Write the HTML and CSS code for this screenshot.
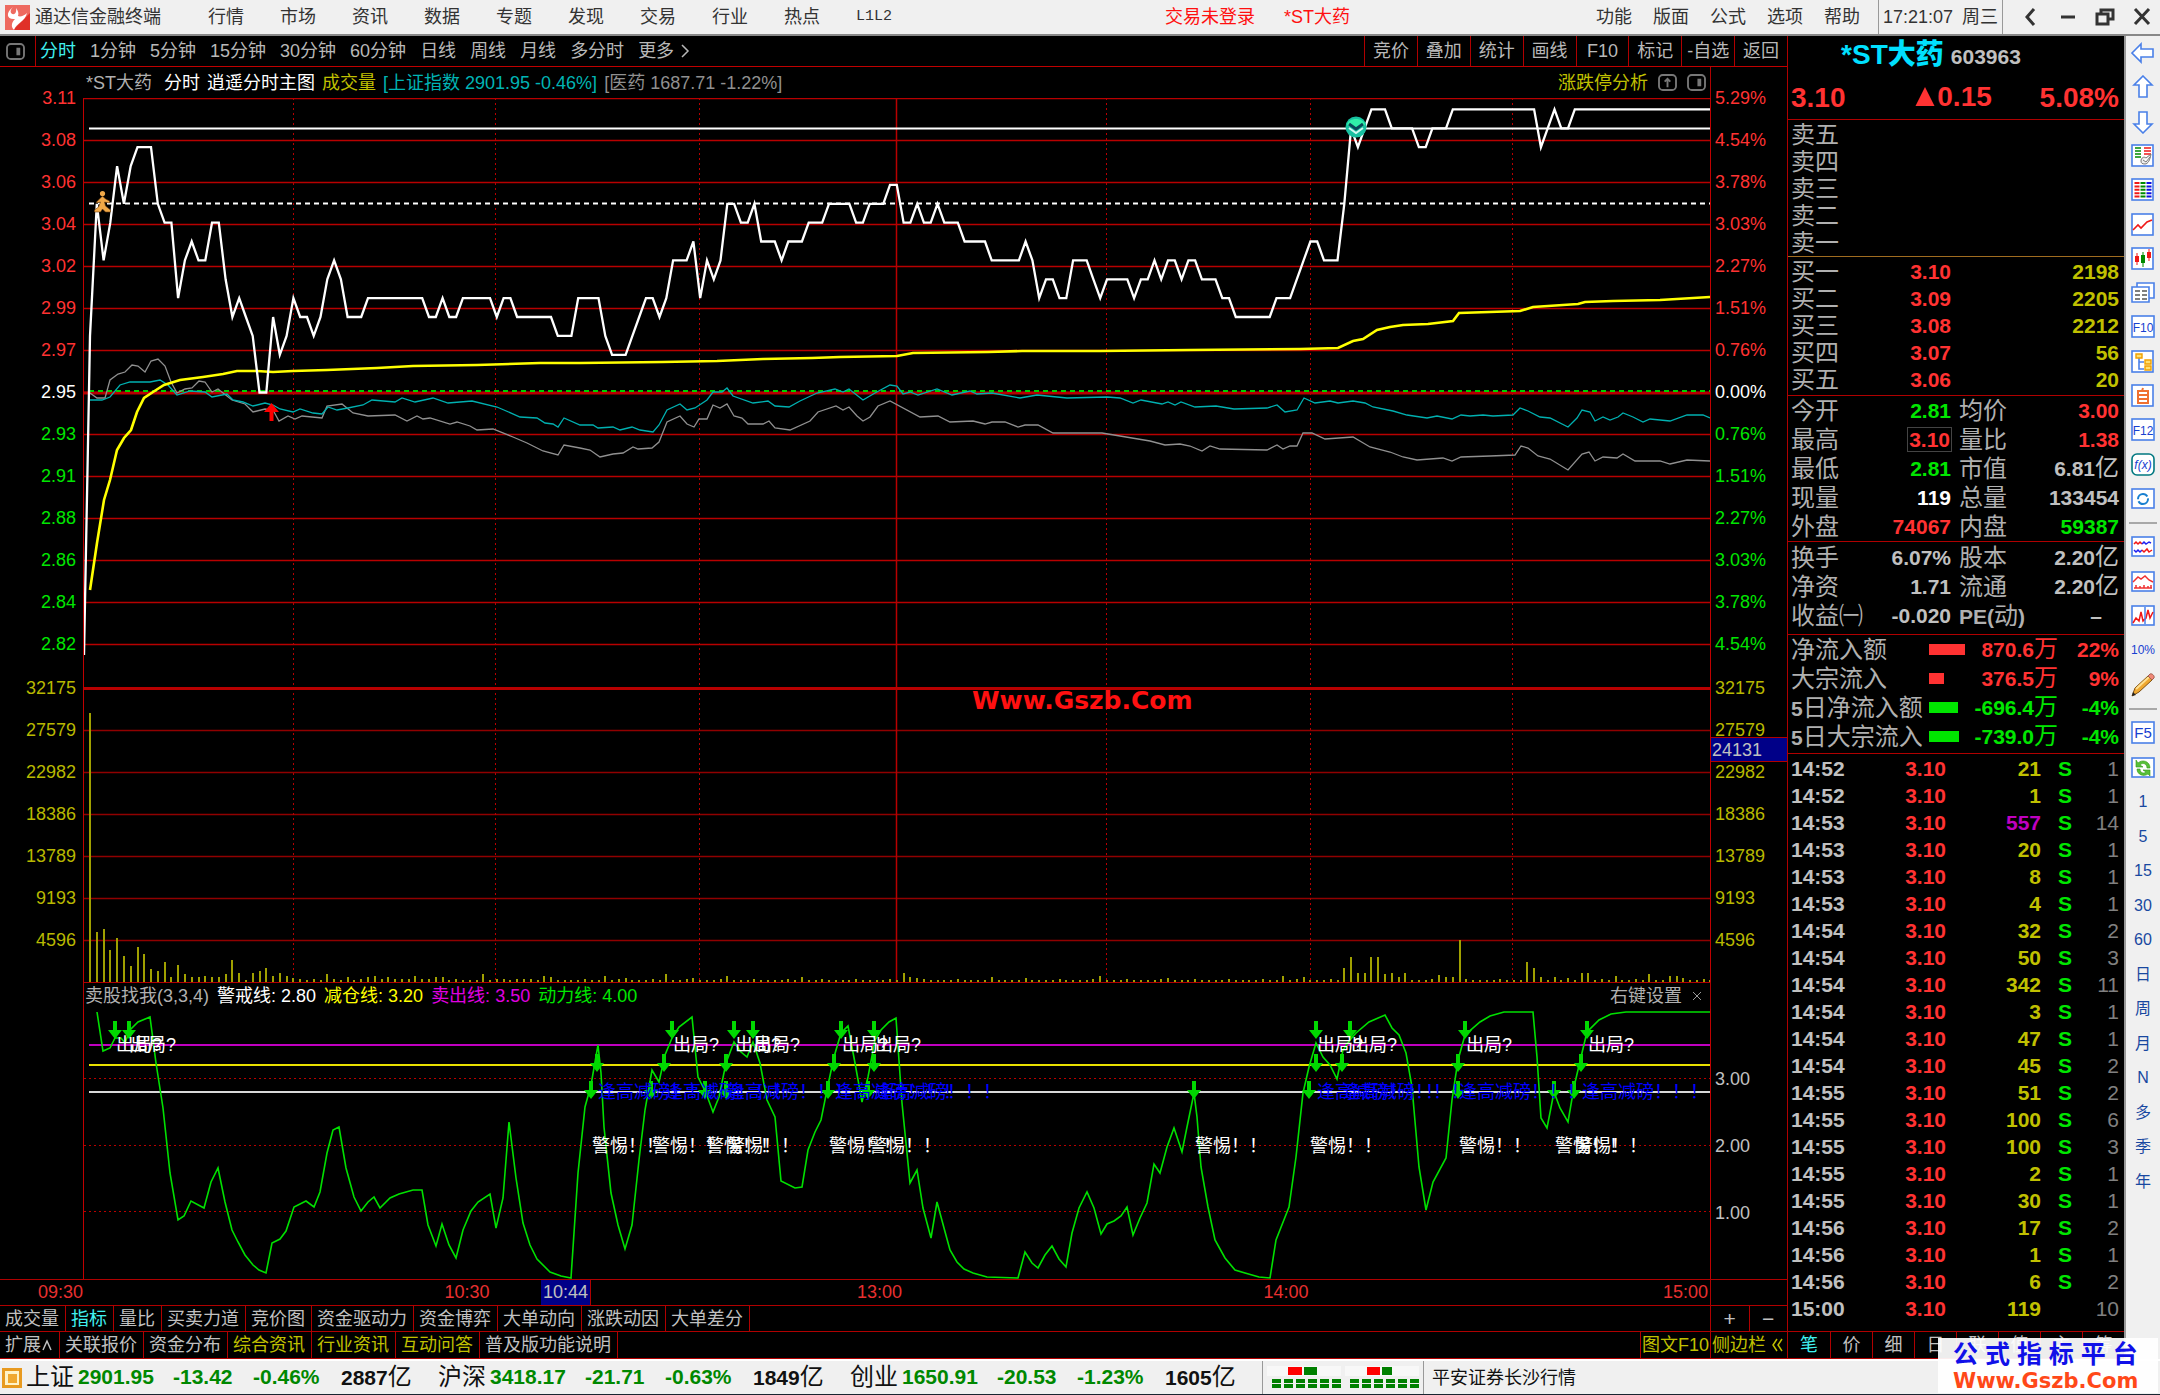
FILE: index.html
```html
<!DOCTYPE html>
<html lang="zh-CN">
<head>
    <meta charset="UTF-8">
    <meta name="viewport" content="width=device-width, initial-scale=1.0">
    <title>通达信金融终端</title>
    <link rel="stylesheet" href="styles.css">
</head>
<body>
    <header class="titlebar">
        <svg class="logo" viewBox="0 0 25 25"><rect width="25" height="25" fill="#e03028"/><path d="M0 0h25v8L8 25H0z" fill="#ee6a60"/><path d="M8 2C0 8 2 15 10 14 6 18 6 22 9 25c2-7 11-8 13-17-3 3-7 4-9 3 1-3 0-5-2-8 1 5-2 8-5 5-1-2 0-4 2-6z" fill="#fff"/></svg>
        <span class="app-name">通达信金融终端</span>
        <nav class="main-menu">
            <button>行情</button><button>市场</button><button>资讯</button><button>数据</button><button>专题</button><button>发现</button><button>交易</button><button>行业</button><button>热点</button><button class="mono">L1L2</button>
        </nav>
        <div class="login-state"><span>交易未登录</span><span>*ST大药</span></div>
        <nav class="sub-menu">
            <button>功能</button><button>版面</button><button>公式</button><button>选项</button><button>帮助</button>
        </nav>
        <div class="clock"><span>17:21:07</span><span>周三</span></div>
        <div class="window-buttons">
            <button aria-label="后退"><svg viewBox="0 0 20 20"><path d="M13 2 6 10l7 8"/></svg></button>
            <button aria-label="最小化"><svg viewBox="0 0 20 20"><path d="M3 10h14"/></svg></button>
            <button aria-label="还原"><svg viewBox="0 0 20 20"><path d="M2 7h11v10H2zM6 7V3h12v9h-5"/></svg></button>
            <button aria-label="关闭"><svg viewBox="0 0 20 20"><path d="m3 2 14 15M17 2 3 17"/></svg></button>
        </div>
    </header>

    <main class="workspace">
        <section class="chart-area">
            <div class="toolbar">
                <button class="panel-toggle" aria-label="侧栏"><svg viewBox="0 0 20 18"><rect x="1" y="1" width="18" height="16" rx="4"/><path d="M13 5v8" stroke-width="4"/></svg></button>
                <nav class="periods">
                    <button class="active">分时</button><button>1分钟</button><button>5分钟</button><button>15分钟</button><button>30分钟</button><button>60分钟</button><button>日线</button><button>周线</button><button>月线</button><button>多分时</button><button>更多<svg viewBox="0 0 10 16"><path d="m2 2 6 6-6 6"/></svg></button>
                </nav>
                <nav class="tools">
                    <button>竞价</button><button>叠加</button><button>统计</button><button>画线</button><button>F10</button><button>标记</button><button>-自选</button><button>返回</button>
                </nav>
            </div>

            <div class="charts">
                <div class="axis axis-left">
                    <ul class="price-axis">
                        <li class="up">3.11</li><li class="up">3.08</li><li class="up">3.06</li><li class="up">3.04</li><li class="up">3.02</li><li class="up">2.99</li><li class="up">2.97</li><li class="flat">2.95</li><li class="down">2.93</li><li class="down">2.91</li><li class="down">2.88</li><li class="down">2.86</li><li class="down">2.84</li><li class="down">2.82</li>
                    </ul>
                    <ul class="volume-axis">
                        <li>32175</li><li>27579</li><li>22982</li><li>18386</li><li>13789</li><li>9193</li><li>4596</li>
                    </ul>
                </div>
                <div class="plots">
                    <div class="legend">
                        <span class="grey first">*ST大药</span><span class="white">分时</span><span class="white">逍遥分时主图</span><span class="olive">成交量</span><span class="teal">[上证指数 2901.95 -0.46%]</span><span class="dim">[医药 1687.71 -1.22%]</span>
                        <div class="legend-right">
                            <button class="olive">涨跌停分析</button>
                            <button class="box-icon" aria-label="上移"><svg viewBox="0 0 20 18"><rect x="1" y="1" width="18" height="16" rx="4"/><path d="M10 14V6M7 8l3-3 3 3" stroke-width="2"/></svg></button>
                            <button class="box-icon" aria-label="侧栏"><svg viewBox="0 0 20 18"><rect x="1" y="1" width="18" height="16" rx="4"/><path d="M13 5v8" stroke-width="4"/></svg></button>
                        </div>
                    </div>
                    <div class="plot plot-price">
                        <svg id="price" viewBox="84 98 1626 884" preserveAspectRatio="none"></svg>
                        <span class="site-mark">Www.Gszb.Com</span>
                    </div>
                    <div class="legend legend-indicator">
                        <span class="grey">卖股找我(3,3,4)</span><span class="white">警戒线: 2.80</span><span class="yellow">减仓线: 3.20</span><span class="magenta">卖出线: 3.50</span><span class="green">动力线: 4.00</span>
                        <div class="legend-right">
                            <button class="grey">右键设置</button>
                            <button class="close" aria-label="关闭指标"><svg viewBox="0 0 10 10"><path d="m1 1 8 8M9 1 1 9"/></svg></button>
                        </div>
                    </div>
                    <div class="plot plot-indicator" id="indicator-plot">
                        <svg id="indicator" viewBox="84 1009 1626 270" preserveAspectRatio="none"></svg>
                    </div>
                </div>
                <div class="axis axis-right">
                    <ul class="price-axis">
                        <li class="up">5.29%</li><li class="up">4.54%</li><li class="up">3.78%</li><li class="up">3.03%</li><li class="up">2.27%</li><li class="up">1.51%</li><li class="up">0.76%</li><li class="flat">0.00%</li><li class="down">0.76%</li><li class="down">1.51%</li><li class="down">2.27%</li><li class="down">3.03%</li><li class="down">3.78%</li><li class="down">4.54%</li>
                    </ul>
                    <ul class="volume-axis">
                        <li>32175</li><li>27579</li><li>22982</li><li>18386</li><li>13789</li><li>9193</li><li>4596</li>
                    </ul>
                    <ul class="indicator-axis">
                        <li>3.00</li><li>2.00</li><li>1.00</li>
                    </ul>
                    <span class="cursor-value">24131</span>
                </div>
            </div>

            <div class="time-axis">
                <div class="times"><span>09:30</span><span>10:30</span><span>13:00</span><span>14:00</span><span>15:00</span><b class="cursor-time">10:44</b></div>
                <div class="corner"></div>
            </div>
            <div class="tab-row">
                <nav class="tabs">
                    <button>成交量</button><button class="active">指标</button><button>量比</button><button>买卖力道</button><button>竞价图</button><button>资金驱动力</button><button>资金博弈</button><button>大单动向</button><button>涨跌动因</button><button>大单差分</button>
                </nav>
                <div class="corner zoom"><button>+</button><button>−</button></div>
            </div>
            <div class="tab-row last">
                <nav class="tabs">
                    <button>扩展<svg viewBox="0 0 12 16"><path d="m2 13 4-9 4 9"/></svg></button><button>关联报价</button><button>资金分布</button><button class="olive">综合资讯</button><button class="olive">行业资讯</button><button class="olive">互动问答</button><button>普及版功能说明</button>
                </nav>
                <button class="f10 olive">图文F10</button>
                <div class="corner"><button class="olive side-toggle">侧边栏<svg viewBox="0 0 12 16"><path d="M6 2 2 8l4 6M11 2 7 8l4 6"/></svg></button></div>
            </div>
        </section>

        <aside class="quote">
            <div class="quote-head">
                <div class="name-row"><strong>*ST大药</strong><span>603963</span></div>
                <div class="last-row"><span>3.10</span><span class="change"><svg viewBox="0 0 20 20"><path d="M10 0 20 20H0z"/></svg>0.15</span><span>5.08%</span></div>
            </div>
            <table class="book sell">
                <tr><th>卖五</th><td></td><td></td></tr>
                <tr><th>卖四</th><td></td><td></td></tr>
                <tr><th>卖三</th><td></td><td></td></tr>
                <tr><th>卖二</th><td></td><td></td></tr>
                <tr><th>卖一</th><td></td><td></td></tr>
            </table>
            <table class="book buy">
                <tr><th>买一</th><td class="up">3.10</td><td class="olive">2198</td></tr>
                <tr><th>买二</th><td class="up">3.09</td><td class="olive">2205</td></tr>
                <tr><th>买三</th><td class="up">3.08</td><td class="olive">2212</td></tr>
                <tr><th>买四</th><td class="up">3.07</td><td class="olive">56</td></tr>
                <tr><th>买五</th><td class="up">3.06</td><td class="olive">20</td></tr>
            </table>
            <table class="facts">
                <tr><th>今开</th><td class="down">2.81</td><th>均价</th><td class="up">3.00</td></tr>
                <tr><th>最高</th><td class="up"><span class="boxed">3.10</span></td><th>量比</th><td class="up">1.38</td></tr>
                <tr><th>最低</th><td class="down">2.81</td><th>市值</th><td>6.81<i>亿</i></td></tr>
                <tr><th>现量</th><td class="flat">119</td><th>总量</th><td>133454</td></tr>
                <tr><th>外盘</th><td class="up">74067</td><th>内盘</th><td class="down">59387</td></tr>
            </table>
            <table class="facts finance">
                <tr><th>换手</th><td>6.07%</td><th>股本</th><td>2.20<i>亿</i></td></tr>
                <tr><th>净资</th><td>1.71</td><th>流通</th><td>2.20<i>亿</i></td></tr>
                <tr><th>收益㈠</th><td>-0.020</td><th><b>PE(</b>动<b>)</b></th><td class="none">–</td></tr>
            </table>
            <table class="flow">
                <tr class="up"><th>净流入额</th><td><span class="bar" style="width:36px"></span></td><td>870.6<i>万</i></td><td>22%</td></tr>
                <tr class="up"><th>大宗流入</th><td><span class="bar" style="width:15px"></span></td><td>376.5<i>万</i></td><td>9%</td></tr>
                <tr class="down"><th><b>5</b>日净流入额</th><td><span class="bar" style="width:29px"></span></td><td>-696.4<i>万</i></td><td>-4%</td></tr>
                <tr class="down"><th><b>5</b>日大宗流入</th><td><span class="bar" style="width:30px"></span></td><td>-739.0<i>万</i></td><td>-4%</td></tr>
            </table>
            <table class="ticks">
                <tr><td>14:52</td><td>3.10</td><td>21</td><td>S</td><td>1</td></tr>
                <tr><td>14:52</td><td>3.10</td><td>1</td><td>S</td><td>1</td></tr>
                <tr><td>14:53</td><td>3.10</td><td class="big">557</td><td>S</td><td>14</td></tr>
                <tr><td>14:53</td><td>3.10</td><td>20</td><td>S</td><td>1</td></tr>
                <tr><td>14:53</td><td>3.10</td><td>8</td><td>S</td><td>1</td></tr>
                <tr><td>14:53</td><td>3.10</td><td>4</td><td>S</td><td>1</td></tr>
                <tr><td>14:54</td><td>3.10</td><td>32</td><td>S</td><td>2</td></tr>
                <tr><td>14:54</td><td>3.10</td><td>50</td><td>S</td><td>3</td></tr>
                <tr><td>14:54</td><td>3.10</td><td>342</td><td>S</td><td>11</td></tr>
                <tr><td>14:54</td><td>3.10</td><td>3</td><td>S</td><td>1</td></tr>
                <tr><td>14:54</td><td>3.10</td><td>47</td><td>S</td><td>1</td></tr>
                <tr><td>14:54</td><td>3.10</td><td>45</td><td>S</td><td>2</td></tr>
                <tr><td>14:55</td><td>3.10</td><td>51</td><td>S</td><td>2</td></tr>
                <tr><td>14:55</td><td>3.10</td><td>100</td><td>S</td><td>6</td></tr>
                <tr><td>14:55</td><td>3.10</td><td>100</td><td>S</td><td>3</td></tr>
                <tr><td>14:55</td><td>3.10</td><td>2</td><td>S</td><td>1</td></tr>
                <tr><td>14:55</td><td>3.10</td><td>30</td><td>S</td><td>1</td></tr>
                <tr><td>14:56</td><td>3.10</td><td>17</td><td>S</td><td>2</td></tr>
                <tr><td>14:56</td><td>3.10</td><td>1</td><td>S</td><td>1</td></tr>
                <tr><td>14:56</td><td>3.10</td><td>6</td><td>S</td><td>2</td></tr>
                <tr><td>15:00</td><td>3.10</td><td>119</td><td></td><td>10</td></tr>
            </table>
            <nav class="quote-tabs">
                <button class="active">笔</button><button>价</button><button>细</button><button>日</button><button>联</button><button>值</button><button>主</button><button>筹</button>
            </nav>
        </aside>

        <nav class="dock">
            <div class="dock-group first">
                <button aria-label="后退"><svg viewBox="0 0 24 24"><path d="M1 12 10 3v5h12v8H10v5z" fill="#fff" stroke="#4a80e8" stroke-width="1.6"/></svg></button>
                <button aria-label="上翻"><svg viewBox="0 0 24 24"><path d="M12 1 21 10h-5v12H8V10H3z" fill="#fff" stroke="#4a80e8" stroke-width="1.6"/></svg></button>
                <button aria-label="下翻"><svg viewBox="0 0 24 24"><path d="M12 23 21 14h-5V2H8v12H3z" fill="#fff" stroke="#4a80e8" stroke-width="1.6"/></svg></button>
                <button aria-label="自选行情"><svg viewBox="0 0 24 24"><rect class="frame" x="1" y="1" width="21" height="21"/><path d="M4 4h6M4 7h6M4 10h6M4 13h6" stroke="#008a00" stroke-width="1.6"/><path d="M13 4h7M13 7h7M13 10h7" stroke="#f01818" stroke-width="1.6"/><path d="M10 17c0-3 3-5 5-3l5-4c-1 6-3 10-6 10s-4-1-4-3zm2-1 3 2 4-5" fill="#eee" stroke="#777"/></svg></button>
                <button aria-label="行情列表"><svg viewBox="0 0 24 24"><rect class="frame" x="1" y="1" width="21" height="21"/><g fill="none" stroke-width="5" stroke-dasharray="2 1.4"><path d="M6 4v16" stroke="#f01818"/><path d="M12 4v16" stroke="#008a00"/><path d="M18 4v16" stroke="#1010e0"/></g></svg></button>
                <button aria-label="分时图"><svg viewBox="0 0 24 24"><rect class="frame" x="1" y="1" width="21" height="21"/><path d="m2 17 5-5 3 3 6-6 5-2" fill="none" stroke="#f01818" stroke-width="1.6"/></svg></button>
                <button aria-label="K线图"><svg viewBox="0 0 24 24"><rect class="frame" x="1" y="1" width="21" height="21"/><path d="M6 6v12M18 2v12" stroke="#f01818"/><path d="M12 5v15" stroke="#008a00"/><path d="M4 9h4v6H4zM16 5h4v6h-4z" fill="#f01818"/><path d="M10 8h4v8h-4z" fill="#008a00"/></svg></button>
                <button aria-label="资料"><svg viewBox="0 0 24 24"><path class="frame" d="M6 2h17v15H6z"/><path class="frame" d="M1 6h17v15H1z"/><path d="M4 10h5M4 14h5M4 18h5M11 10h5M11 14h5M11 18h5" stroke="#555" stroke-width="1.4"/></svg></button>
                <button aria-label="F10"><svg viewBox="0 0 24 24"><rect class="frame" x="1" y="1" width="22" height="21"/><text x="12" y="17" text-anchor="middle">F10</text></svg></button>
                <button aria-label="板块"><svg viewBox="0 0 24 24"><rect class="frame" x="1" y="1" width="21" height="21"/><path d="M8 8v11h5M8 12h5" fill="none" stroke="#4a80e8" stroke-width="1.6"/><path d="M5 4h6v4H5zM14 10h6v4h-6zM14 16h6v4h-6z" fill="#ffe070" stroke="#f0a000" stroke-width="1.4"/></svg></button>
                <button aria-label="自选"><svg viewBox="0 0 24 24"><rect class="frame" x="1" y="1" width="21" height="21"/><path d="M7 7h10v12H7zM7 11h10M7 15h10M12 4l-1 3" fill="none" stroke="#f07030" stroke-width="2"/></svg></button>
                <button aria-label="F12"><svg viewBox="0 0 24 24"><rect class="frame" x="1" y="1" width="22" height="21"/><text x="12" y="17" text-anchor="middle">F12</text></svg></button>
                <button aria-label="公式"><svg viewBox="0 0 24 24"><rect x="1" y="1" width="22" height="21" rx="5" fill="#fff" stroke="#007880" stroke-width="1.6"/><text x="12" y="16" text-anchor="middle" font-style="italic">f(x)</text></svg></button>
                <button aria-label="刷新"><svg viewBox="0 0 24 24"><rect class="frame" x="1" y="2" width="22" height="19"/><circle cx="12" cy="12" r="5" fill="none" stroke="#1880d0" stroke-width="2" stroke-dasharray="13 2"/></svg></button>
            </div>
            <hr>
            <div class="dock-group short">
                <button aria-label="多股同列"><svg viewBox="0 0 24 24"><rect class="frame" x="1" y="2" width="22" height="19"/><path d="m3 9 2-2 2 2 2-2 2 2" fill="none" stroke="#f01818" stroke-width="1.5"/><path d="m11 9 2-2 2 2 3-2 2 1M3 15l2 2 2-2 2 2 2-2" fill="none" stroke="#2020f0" stroke-width="1.5"/><path d="m11 15 2 2 3-3 2 3 3-2" fill="none" stroke="#f01818" stroke-width="1.5"/></svg></button>
                <button aria-label="走势叠加"><svg viewBox="0 0 24 24"><rect class="frame" x="1" y="2" width="22" height="19"/><path d="m2 12 5-5 3 2 4-3 4 4 4 2M3 18h18M5 15v3M9 16v2M13 15v3M17 16v2M20 15v3" fill="none" stroke="#f03030" stroke-width="1.5"/></svg></button>
                <button aria-label="历史同步"><svg viewBox="0 0 24 24"><rect class="frame" x="1" y="2" width="22" height="19"/><path d="m2 19 3-5 3 3 2-9 2 9 3-3 2-8 2 8 3-6" fill="none" stroke="#f01818" stroke-width="1.5"/><path d="M14 3v17" stroke="#4a80e8" stroke-width="1.5"/></svg></button>
                <button class="pct">10%</button>
                <button aria-label="画笔"><svg viewBox="0 0 24 24"><path d="m1 23 3-8L17 3l4 4L8 19z" fill="#f0a830" stroke="#805010"/><path d="M5 16 18 4" stroke="#ffe090" stroke-width="2"/><path d="m17 3 2-2c2-1 5 2 4 4l-2 2z" fill="#f08878" stroke="#a06050"/><path d="m1 23 1-4 3 3z" fill="#222"/></svg></button>
            </div>
            <hr>
            <div class="dock-group long">
                <button aria-label="F5"><svg viewBox="0 0 24 24"><rect class="frame" x="1" y="1" width="22" height="21"/><text class="wide" x="12" y="17" text-anchor="middle">F5</text></svg></button>
                <button aria-label="同步"><svg viewBox="0 0 24 24"><rect class="frame" x="1" y="2" width="22" height="19"/><path d="M5 4v7h7l-3-2c3-3 7-1 7 3h3c0-7-8-9-12-5z" fill="#58c038" stroke="#309818" stroke-width=".6"/><path d="M19 20v-6h-7l3 2c-2 2-6 1-6-3H6c0 6 7 8 11 5z" fill="#58c038" stroke="#309818" stroke-width=".6"/></svg></button>
                <button>1</button><button>5</button><button>15</button><button>30</button><button>60</button><button>日</button><button>周</button><button>月</button><button>N</button><button>多</button><button>季</button><button>年</button>
            </div>
        </nav>
    </main>

    <footer class="statusbar">
        <svg class="status-icon" viewBox="0 0 20 20"><rect width="20" height="20" fill="#e89a20"/><rect x="3" y="3" width="14" height="14" fill="#fff3c8"/><rect x="6" y="6" width="9" height="9" fill="#f0a830"/></svg>
        <div class="index"><em>上证</em><b>2901.95</b><b>-13.42</b><b>-0.46%</b><span>2887<i>亿</i></span></div>
        <div class="index"><em>沪深</em><b>3418.17</b><b>-21.71</b><b>-0.63%</b><span>1849<i>亿</i></span></div>
        <div class="index"><em>创业</em><b>1650.91</b><b>-20.53</b><b>-1.23%</b><span>1605<i>亿</i></span></div>
        <div class="breadth">
            <svg viewBox="0 0 156 26"><path d="M2 1h74v10H2zM80 1h74v10H80z" fill="#f8f8f8"/><path d="M23 2h14v8H23zM102 2h13v8h-13z" fill="#f00"/><path d="M39 2h13v8H39zM117 2h10v8h-10z" fill="#008000"/><path d="M7 16h70M7 21h70M85 16h70M85 21h70" stroke="#008000" stroke-width="4" stroke-dasharray="9 3"/></svg>
        </div>
        <span class="broker">平安证券长沙行情</span>
    </footer>

    <div class="promo"><span>公 式 指 标 平 台</span><strong>Www.Gszb.Com</strong></div>
    <script src="chart.js"></script>
</body>
</html>
```
FILE: styles.css
```css
* {
    box-sizing: border-box;
}
html, body {
    margin: 0;
    min-height: 100%;
}
body {
    display: flex;
    flex-direction: column;
    min-height: 100vh;
    background: #000;
    color: #c0c0c0;
    font-family: "Liberation Sans", "Noto Sans CJK SC", sans-serif;
    font-size: 18px;
    line-height: 24px;
    white-space: nowrap;
}
button {
    margin: 0;
    padding: 0;
    border: 0;
    background: none;
    color: inherit;
    font: inherit;
    cursor: pointer;
}
svg {
    display: block;
}
i, em {
    font-style: normal;
}
ul {
    margin: 0;
    padding: 0;
    list-style: none;
}

/* colours */
.up { color: #ff3232; }
.down { color: #00e600; }
.flat, .white { color: #fff; }
.grey { color: #b0b0b0; }
.dim { color: #909090; }
.olive { color: #c0c000; }
.teal { color: #00b4b4; }
.yellow { color: #ffff00; }
.magenta { color: #e000e0; }
.green { color: #00e600; }

/* title bar */
.titlebar {
    display: flex;
    align-items: center;
    height: 36px;
    padding: 0 8px 0 5px;
    border-bottom: 2px solid #888;
    background: #f0f0f0;
    color: #333;
    line-height: 26px;
}
.logo {
    width: 25px;
    height: 25px;
    margin-right: 5px;
}
.main-menu {
    display: flex;
    gap: 36px;
    margin-left: 47px;
}
.mono {
    font-family: "Liberation Mono", monospace;
    font-size: 15px;
}
.login-state {
    display: flex;
    flex: 1;
    justify-content: center;
    gap: 29px;
    padding-left: 27px;
    color: #ff1010;
}
.sub-menu {
    display: flex;
    gap: 21px;
    margin-right: 18px;
}
.clock {
    display: flex;
    gap: 9px;
    align-items: center;
    height: 34px;
    padding: 0 4px;
    border-left: 1px solid #999;
    border-right: 1px solid #999;
}
.window-buttons {
    display: flex;
    gap: 17px;
    margin-left: 18px;
}
.window-buttons svg {
    width: 20px;
    height: 20px;
    fill: none;
    stroke: #333;
    stroke-width: 3;
}

.workspace {
    display: grid;
    grid-template-columns: minmax(0, 1fr) 337px 36px;
    flex: 1;
}

/* left side */
.chart-area {
    display: flex;
    flex-direction: column;
}
.toolbar {
    display: flex;
    height: 31px;
    border-bottom: 1px solid #c00000;
    color: #b8b8b8;
}
.panel-toggle {
    width: 36px;
    padding-left: 6px;
    border-right: 1px solid #b00000;
}
.panel-toggle svg, .box-icon svg {
    width: 19px;
    height: 17px;
    fill: none;
    stroke: #777;
    stroke-width: 2;
}
.periods {
    display: flex;
    flex: 1;
    gap: 14px;
    padding-left: 4px;
}
.periods .active, .tabs .active, .quote-tabs .active {
    color: #40f0f0;
}
.periods svg, .tabs svg, .side-toggle svg {
    display: inline-block;
    width: 12px;
    height: 16px;
    vertical-align: -2px;
    fill: none;
    stroke: currentColor;
    stroke-width: 1.5;
}
.periods svg, .side-toggle svg {
    margin-left: 5px;
}
.tools {
    display: grid;
    grid-template-columns: repeat(8, 1fr);
    width: 423px;
}
.tools button {
    border-left: 1px solid #b00000;
}

.charts {
    display: grid;
    grid-template-columns: 83px minmax(0, 1fr) 76px;
}
.axis {
    padding-top: 10px;
}
.axis li {
    height: 42px;
    line-height: 43px;
}
.axis-left {
    padding-right: 7px;
    text-align: right;
}
.axis-right {
    position: relative;
    padding-left: 4px;
}
.volume-axis {
    margin-top: 2px;
    color: #b8b800;
}
.indicator-axis {
    margin-top: 84px;
}
.axis .indicator-axis li {
    height: 67px;
    line-height: 68px;
}
.cursor-value {
    position: absolute;
    top: 670px;
    left: 0;
    right: 0;
    height: 25px;
    padding-left: 1px;
    border-top: 1px solid #b00000;
    border-bottom: 1px solid #b00000;
    background: #000088;
}
.legend {
    display: flex;
    align-items: center;
    gap: 7px;
    height: 31px;
    padding-left: 3px;
    border-right: 1px solid #b00000;
}
.legend .first {
    margin-right: 5px;
}
.legend-right {
    display: flex;
    align-items: center;
    gap: 10px;
    margin-left: auto;
    padding-right: 4px;
}
.legend-indicator {
    gap: 8px;
    height: 27px;
    padding-left: 1px;
    border: 1px solid #b00000;
    border-bottom: 0;
}
.close svg {
    width: 10px;
    height: 10px;
    margin-right: 4px;
    fill: none;
    stroke: #999;
}
.plot {
    position: relative;
    border-left: 1px solid #c00000;
    border-right: 1px solid #c00000;
}
.plot svg {
    width: 100%;
}
.plot-price svg {
    height: 884px;
}
.plot-indicator svg {
    height: 270px;
}
.plot path, .plot polyline, .plot line {
    fill: none;
    vector-effect: non-scaling-stroke;
}
.plot .grid { stroke: #b80000; stroke-width: 1.5; }
.plot .grid-volume { stroke: #900000; stroke-width: 1.5; }
.plot .dots { stroke: #b80000; stroke-dasharray: 2 3; }
.plot .base { stroke: #b80000; stroke-width: 3; }
.plot .price { stroke: #fff; stroke-width: 2.3; }
.plot .average { stroke: #ffff00; stroke-width: 2.6; }
.plot .index-line { stroke: #00b0b0; stroke-width: 1.3; }
.plot .sector-line { stroke: #909090; stroke-width: 1.3; }
.plot .volume { stroke: #a0a000; stroke-width: 2; }
.plot .power { stroke: #00e000; stroke-width: 1.6; }
.plot .arrow { fill: #00d800; }
.plot .arrow-red { fill: #ff0000; }
.plot .walker { fill: #f0a848; }
.site-mark {
    position: absolute;
    top: 588px;
    left: 50%;
    margin-left: 75px;
    color: #ff1010;
    font: bold 25px/30px "DejaVu Sans", sans-serif;
}
.note {
    position: absolute;
    line-height: 20px;
    color: #fff;
}
.note.trim {
    color: #0000ff;
}

.time-axis, .tab-row {
    display: flex;
    height: 26px;
    border-top: 1px solid #b00000;
}
.tab-row.last {
    height: 28px;
    border-bottom: 1px solid #b00000;
}
.times {
    position: relative;
    display: grid;
    flex: 1;
    grid-template-columns: 83px 407fr 413fr 407fr 400fr;
    padding-right: 2px;
    color: #e83030;
    text-align: right;
}
.cursor-time {
    position: absolute;
    top: 0;
    left: 541px;
    height: 25px;
    padding: 0 2px;
    border-right: 1px solid #b00000;
    background: #000088;
    color: #c0c0c0;
    font-weight: normal;
}
.corner {
    display: flex;
    width: 77px;
    border-left: 1px solid #b00000;
}
.zoom button {
    flex: 1;
    font-size: 21px;
}
.zoom button + button {
    border-left: 1px solid #b00000;
}
.tabs {
    display: flex;
    flex: 1;
}
.tabs button {
    padding: 0 6px 0 5px;
    border-right: 1px solid #b00000;
}
.f10 {
    padding: 0 1px;
    border-left: 1px solid #b00000;
}
.side-toggle {
    padding-left: 1px;
}

/* quote panel */
.quote {
    display: flex;
    flex-direction: column;
    border-left: 1px solid #b00000;
}
.quote-head {
    border-bottom: 1px solid #b00000;
    font-weight: bold;
}
.name-row {
    display: flex;
    align-items: baseline;
    justify-content: center;
    gap: 7px;
    height: 38px;
    padding-right: 50px;
    font-size: 21px;
    line-height: 38px;
}
.name-row strong {
    color: #00e0ff;
    font-size: 28px;
}
.last-row {
    display: flex;
    justify-content: space-between;
    height: 45px;
    padding: 0 5px 0 3px;
    color: #ff3232;
    font-size: 28px;
    line-height: 47px;
}
.change {
    display: flex;
    align-items: center;
    gap: 2px;
    padding-left: 22px;
}
.change svg {
    width: 20px;
    height: 19px;
    fill: #ff3232;
}
.quote table {
    width: 100%;
    padding: 0 5px 0 3px;
    border-spacing: 0;
    border-bottom: 1px solid #b00000;
    table-layout: fixed;
    font-size: 21px;
    font-weight: bold;
    line-height: 27px;
}
.quote td, .quote th {
    height: 29px;
    padding: 0;
    text-align: right;
}
.quote th, .quote i {
    font-size: 24px;
    font-weight: normal;
}
.quote th {
    color: #b0b0b0;
    text-align: left;
}
.quote th b {
    font-size: 21px;
}
.quote th b, .quote i {
    line-height: 1;
}
.quote table.book {
    padding-top: 1px;
}
.quote table.sell {
    border-color: #a06c20;
}
.quote table.buy {
    padding-bottom: 2px;
}
.quote .book td, .quote .book th {
    height: 27px;
}
.book th { width: 80px; }
.book td:nth-child(2) { width: 80px; }
.facts th:nth-child(1) { width: 80px; }
.facts td:nth-child(2) { width: 80px; }
.quote .facts th:nth-child(3) {
    width: 78px;
    padding-left: 8px;
}
.quote table.finance {
    padding-top: 1px;
    padding-bottom: 4px;
}
.quote .none {
    padding-right: 17px;
}
.boxed {
    padding: 0 1px;
    outline: 1px solid #444;
}
.quote table.flow {
    padding-bottom: 2px;
}
.flow th { width: 138px; }
.flow td:nth-child(2) { width: 38px; }
.flow td:nth-child(3) { width: 91px; }
.bar {
    display: block;
    height: 11px;
    background: currentColor;
}
.quote table.ticks {
    padding-top: 1px;
    border-bottom: 0;
}
.quote .ticks td {
    height: 27px;
}
.quote .ticks td:nth-child(1) { width: 70px; text-align: left; }
.ticks td:nth-child(2) { width: 85px; color: #ff3232; }
.ticks td:nth-child(3) { width: 95px; color: #c0c000; }
.ticks td:nth-child(4) { width: 31px; color: #00e600; }
.ticks td:nth-child(5) { color: #808080; font-weight: normal; }
.ticks td.big { color: #c000c0; }
.quote-tabs {
    display: grid;
    grid-template-columns: repeat(8, 1fr);
    height: 28px;
    margin-top: auto;
    border-top: 1px solid #b00000;
    border-bottom: 1px solid #b00000;
}
.quote-tabs button + button {
    border-left: 1px solid #b00000;
}

/* icon dock */
.dock {
    display: flex;
    flex-direction: column;
    border-left: 2px solid #999;
    background: #f0f0f0;
    color: #1848a0;
    font-size: 16px;
}
.dock-group {
    display: flex;
    flex-direction: column;
}
.dock-group.first { height: 480px; }
.dock-group.long { height: 483px; }
.dock-group.short { height: 172px; }
.dock-group button {
    flex: 1;
    min-height: 0;
}
.dock svg {
    width: 24px;
    height: 24px;
    margin: 0 auto;
}
.dock .frame {
    fill: #fff;
    stroke: #4a80e8;
    stroke-width: 1.6;
}
.dock text {
    fill: #1840d0;
    font-size: 12px;
}
.dock text.wide {
    font-size: 15px;
}
.dock .pct {
    color: #1840d0;
    font-size: 12px;
}
.dock hr {
    width: 28px;
    margin: 6px auto;
    border: 0;
    border-top: 2px solid #a8a8a8;
}

/* status bar */
.statusbar {
    display: flex;
    align-items: center;
    height: 36px;
    padding-left: 2px;
    border-top: 2px solid #fff;
    border-bottom: 1px solid #182430;
    background: #f0f0f0;
    color: #111;
}
.status-icon {
    width: 20px;
    height: 20px;
    margin-right: 4px;
}
.index {
    display: grid;
    grid-template-columns: 52px 95px 80px 88px 97px;
    font-size: 21px;
    font-weight: bold;
}
.index b {
    color: #008800;
}
.index em, .index i {
    font-size: 24px;
    font-weight: normal;
}
.breadth {
    display: flex;
    align-items: center;
    height: 33px;
    padding: 0 2px;
    border-left: 1px solid #999;
    border-right: 1px solid #999;
}
.breadth svg {
    width: 156px;
    height: 26px;
}
.broker {
    margin-left: 8px;
}

.promo {
    position: absolute;
    right: 2px;
    bottom: 2px;
    display: flex;
    flex-direction: column;
    width: 220px;
    height: 55px;
    padding-left: 15px;
    background: rgba(255, 255, 255, 0.93);
    color: #1010e8;
    font-size: 25px;
    font-weight: bold;
    line-height: 32px;
}
.promo strong {
    color: #ff4818;
    font: bold 21px/22px "DejaVu Sans", sans-serif;
}
```
FILE: chart.js
```js
// one value per trading minute, in cents; "300x9" repeats a value
const prices = expand('298 305 302 304 307 305 307 308x3 305 304x2 300 302 303 302x2 304x2 301 299 300 299 298 295x2 299 297 298 300 299x2 298 299 301 302 301 299x3 300x9 299x2 300 299x2 300x5 299 300x2 299x6 298x3 300x4 298 297x3 298 299 300x2 299 300 302x3 303 300 302 301 302 305x2 304x2 305 303x3 302 303x3 304x3 305x4 304x2 305x3 306x2 304x2 305 304x2 305 304x3 303x4 302x5 303 302 300 301x2 300x2 302x3 301 300 301x4 300 301x2 302 301 302x2 301 302x2 301x3 300x2 299x6 300x3 301 302 303x2 302x3 305 309 308 309 310x3 309x4 308x2 309x3 310x13 308 309 310 309x2 310x21');

const average = '90,590 97,543 104,500 110,480 117,450 124,438 131,430 137,412 144,398 153,392 164,385 180,380 203,377 223,374 237,371 257,371 273,372 293,371 327,370 377,368 413,366 477,365 540,363 580,363 662,362 717,361 763,359 812,358 840,357 897,356 913,353 988,352 1022,351 1100,351 1190,350 1300,349 1338,348 1353,341 1363,339 1377,330 1390,327 1403,325 1428,324 1453,321 1459,313 1520,311 1533,307 1578,304 1585,302 1613,301 1660,300 1710,297';

const indexLine = '90,400 102,400 110,397 120,385 130,382 150,382 160,380 168,385 177,395 190,391 205,392 212,397 227,394 233,400 243,402 253,406 265,403 273,405 280,409 293,412 300,409 313,413 322,414 328,407 337,410 348,408 363,405 372,400 395,402 402,398 415,402 433,398 448,403 472,401 497,407 520,417 537,418 545,423 553,424 558,427 564,418 580,425 593,425 598,428 613,427 620,430 632,427 640,430 653,432 659,425 667,410 680,404 687,410 695,408 707,400 713,392 722,392 727,388 733,396 753,403 768,401 775,406 789,407 800,401 817,393 835,389 843,392 849,389 863,400 875,393 890,385 897,386 903,394 910,392 918,395 937,389 952,395 970,391 977,394 992,393 1020,398 1037,395 1067,398 1107,397 1120,398 1133,403 1141,400 1162,404 1168,402 1175,405 1181,402 1195,407 1216,406 1234,409 1267,408 1277,405 1285,412 1297,410 1304,398 1315,403 1330,401 1338,403 1353,401 1365,403 1373,407 1393,411 1407,415 1427,418 1437,416 1452,419 1461,415 1470,416 1483,415 1493,416 1513,415 1520,408 1528,411 1540,417 1550,418 1568,427 1577,418 1582,410 1590,412 1595,421 1603,417 1610,420 1618,417 1623,413 1633,417 1643,422 1650,419 1670,421 1687,415 1703,415 1710,418';

const sectorLine = '90,393 97,398 105,398 110,380 118,374 125,372 132,365 138,366 145,372 151,361 158,359 165,366 171,382 177,393 185,389 192,388 199,381 205,382 212,392 218,389 232,400 245,404 253,412 265,409 273,410 279,421 288,416 295,419 302,416 322,418 327,406 342,404 353,413 368,416 395,415 407,421 417,416 423,419 430,418 450,424 457,422 470,426 477,430 493,429 513,437 527,443 543,451 558,455 564,445 580,448 590,450 600,457 613,454 623,453 633,447 638,449 652,448 659,442 667,422 680,416 687,424 694,427 699,419 707,419 713,405 720,408 727,404 734,416 742,418 748,424 763,424 769,421 775,428 790,430 810,421 818,412 836,406 843,410 849,407 857,416 863,421 870,417 878,406 890,401 920,417 938,416 950,422 973,421 985,424 992,422 1005,422 1018,427 1025,425 1038,425 1053,433 1102,433 1150,441 1165,445 1180,444 1190,446 1202,451 1210,446 1220,449 1267,450 1277,445 1283,449 1290,446 1297,446 1303,433 1312,433 1325,439 1353,437 1370,447 1390,452 1403,457 1417,460 1443,458 1452,461 1461,457 1490,456 1515,455 1521,446 1528,448 1538,456 1550,459 1568,470 1582,454 1589,452 1595,461 1603,457 1617,458 1623,454 1635,461 1660,461 1670,464 1687,460 1710,461';

const power = '97,1012 103,1051 110,1048 115,1038 121,1038 125,1043 130,1030 138,1022 150,1017 156,1063 163,1108 170,1173 178,1220 184,1216 191,1201 204,1208 211,1182 218,1168 225,1202 232,1230 238,1242 245,1255 253,1265 259,1270 266,1273 272,1243 280,1239 286,1231 294,1207 306,1201 314,1207 320,1192 327,1153 333,1130 339,1127 346,1168 354,1197 361,1211 368,1202 374,1197 380,1208 390,1198 399,1194 413,1190 422,1190 428,1225 436,1246 442,1224 449,1245 456,1258 463,1230 471,1211 478,1202 490,1194 496,1228 503,1198 509,1122 516,1178 523,1223 530,1245 537,1259 550,1272 561,1276 571,1278 578,1173 585,1107 591,1085 598,1045 601,1073 604,1127 611,1193 618,1225 625,1249 632,1225 639,1160 645,1110 652,1070 659,1082 665,1055 672,1038 679,1027 692,1017 698,1077 706,1093 713,1112 719,1097 726,1063 734,1042 741,1052 747,1057 753,1042 760,1063 767,1100 775,1117 781,1181 795,1188 802,1187 808,1150 815,1132 821,1120 828,1085 834,1057 841,1033 848,1026 855,1063 862,1102 868,1077 875,1040 881,1030 889,1022 896,1018 902,1103 910,1183 917,1170 923,1208 931,1238 937,1202 944,1228 950,1250 957,1262 964,1269 973,1273 987,1277 1018,1278 1025,1252 1032,1263 1038,1268 1045,1255 1052,1246 1059,1259 1066,1267 1072,1233 1079,1208 1087,1192 1094,1208 1101,1234 1107,1224 1114,1221 1121,1216 1127,1207 1133,1235 1140,1218 1147,1203 1154,1164 1160,1173 1167,1147 1174,1128 1182,1152 1187,1127 1194,1093 1197,1117 1201,1167 1208,1207 1215,1240 1225,1258 1235,1270 1245,1273 1259,1277 1270,1278 1276,1240 1289,1207 1296,1157 1303,1093 1309,1067 1316,1043 1323,1057 1330,1065 1337,1079 1343,1050 1350,1040 1356,1033 1369,1022 1385,1015 1392,1028 1399,1035 1406,1053 1412,1087 1419,1167 1426,1210 1433,1182 1446,1158 1452,1100 1458,1060 1465,1035 1480,1022 1490,1016 1504,1012 1533,1012 1537,1057 1541,1118 1547,1128 1554,1092 1560,1108 1568,1122 1574,1087 1581,1057 1587,1032 1599,1020 1611,1014 1626,1012 1710,1012';

// opening hour volume, then the busy minutes of the rest of the day
const openVolume = [269, 50, 53, 32, 44, 26, 16, 35, 28, 13, 11, 20, 5, 17, 8, 5, 5, 6, 5, 5, 8, 22, 9, 2, 9, 11, 14, 6, 9, 6, 4, 3, 2, 3, 2, 8, 3, 2, 5, 2, 3, 5, 6, 3, 5, 3, 3, 3, 6, 3, 3, 5, 5, 2, 3, 2, 2, 2, 8, 2, 3, 3, 2, 3, 3, 3, 2, 6, 5];
const busyVolume = { 76: 6, 79: 4, 85: 8, 89: 4, 94: 6, 105: 5, 120: 9, 121: 5, 122: 4, 133: 5, 138: 4, 149: 6, 159: 4, 176: 6, 179: 5, 185: 14, 186: 25, 187: 9, 188: 9, 189: 25, 190: 25, 191: 8, 192: 9, 193: 5, 194: 9, 199: 7, 200: 5, 201: 5, 202: 42, 212: 20, 213: 14, 214: 5, 216: 5, 218: 4, 220: 9, 221: 9, 225: 6, 230: 8, 233: 6, 234: 6, 235: 4 };

const sellOut = [115, 129, 672, 734, 753, 841, 874, 1316, 1350, 1465, 1587];
const trim = [597, 664, 726, 834, 874, 1316, 1342, 1458, 1581];
const warn = [591, 651, 705, 726, 828, 868, 1194, 1309, 1458, 1554, 1574];

function expand(text) {
    return text.split(' ').flatMap(item => {
        const [value, count] = item.split('x');
        return Array(Number(count || 1)).fill(Number(value));
    });
}
function minuteX(i) {
    return (90 + 6.78 * i).toFixed(1);
}
function priceY(cents) {
    return (392.5 - (cents - 295) * 18.87).toFixed(1);
}
function hline(y, cls, from = 84, extra = '') {
    return `<line class="${cls}" x1="${from}" x2="1710" y1="${y}" y2="${y}" ${extra}/>`;
}
function vline(x, cls) {
    return `<line class="${cls}" x1="${x}" x2="${x}" y1="98" y2="982"/>`;
}
function arrow(x, tip) {
    return `<path class="arrow" d="M${x} ${tip}l-7 -9h5v-9h4v9h5z"/>`;
}

function drawPrice() {
    let out = '';
    for (let k = 0; k < 14; k++) {
        out += hline(98.5 + 42 * k, 'grid');
    }
    for (let k = 1; k < 7; k++) {
        out += hline(688.5 + 42 * k, 'grid-volume');
    }
    out += hline(688.5, 'base');
    [293.5, 495.5, 699.5, 1106.5, 1310.5, 1512.5].forEach(x => out += vline(x, 'dots'));
    out += vline(896.5, 'grid');
    for (let i = 0; i < 240; i++) {
        const h = openVolume[i] || busyVolume[i] || (i % 5 === 3 ? 3 : 2);
        const x = Math.round(minuteX(i));
        out += `<path class="volume" d="M${x} 982v-${h}"/>`;
    }
    out += hline(393, 'base');
    out += hline(391, 'green-dash', 89, 'stroke="#00d000" stroke-width="2" stroke-dasharray="5 4"');
    out += hline(128.5, 'limit', 89, 'stroke="#fff" stroke-width="2"');
    out += hline(203.5, 'target', 89, 'stroke="#fff" stroke-width="2" stroke-dasharray="5 4"');
    out += `<polyline class="sector-line" points="${sectorLine}"/>`;
    out += `<polyline class="index-line" points="${indexLine}"/>`;
    out += `<polyline class="average" points="${average}"/>`;
    const points = prices.map((p, i) => `${minuteX(i)},${priceY(p)}`).join(' ');
    out += `<polyline class="price" points="84,655 89,390 ${points} 1710,109.4"/>`;
    out += '<path class="arrow-red" d="M271.5 403l7.500 9h-5.500v9h-4v-9h-5.500z"/>';
    // walker on the opening peak
    out += '<circle cx="102.500" cy="193.500" r="2.600" fill="#f0a848"/><path class="walker" stroke="#704010" stroke-width=".6" d="M102.500 196l3 3 4 2v2l-5-1 1 4 5 4v2h-5l-3-3-2 3h-6v-2l4-3 2-5-4 1v-1z"/>';
    out += '<circle cx="1356" cy="127" r="10.500" fill="#18c0a0"/><path style="fill:#30f0a8" d="M1347 125c1-8 17-8 18 0l-9 5z"/>';
    out += '<path stroke="#084858" stroke-width="3" d="M1349 124l7 5 7-5"/><path stroke="#d0f8f0" stroke-width="2" d="M1349 128l7 5 7-5"/>';
    document.getElementById('price').innerHTML = out;
}

function drawIndicator() {
    let out = '';
    [1078.5, 1145.5, 1211.5].forEach(y => out += hline(y, 'dots'));
    out += hline(1045, 'level', 89, 'stroke="#c000c0" stroke-width="2"');
    out += hline(1065, 'level', 89, 'stroke="#e8e000" stroke-width="2"');
    out += hline(1092, 'level', 89, 'stroke="#d8d8d8" stroke-width="2"');
    out += `<polyline class="power" points="${power}"/>`;
    sellOut.forEach(x => out += arrow(x, 1039));
    trim.forEach(x => out += arrow(x, 1072));
    warn.forEach(x => out += arrow(x, 1099));
    document.getElementById('indicator').innerHTML = out;

    addNotes(sellOut, 1035, '出局?', '');
    addNotes(trim, 1082, '逢高减磅！！！', 'trim');
    addNotes(warn, 1136, '警惕！！', '');
}

function addNotes(list, y, text, cls) {
    const plot = document.getElementById('indicator-plot');
    list.forEach(x => {
        const note = document.createElement('span');
        note.className = `note ${cls}`;
        note.textContent = text;
        note.style.left = `${(x + 1 - 84) / 1626 * 100}%`;
        note.style.top = `${y - 1009}px`;
        plot.appendChild(note);
    });
}

drawPrice();
drawIndicator();
```
